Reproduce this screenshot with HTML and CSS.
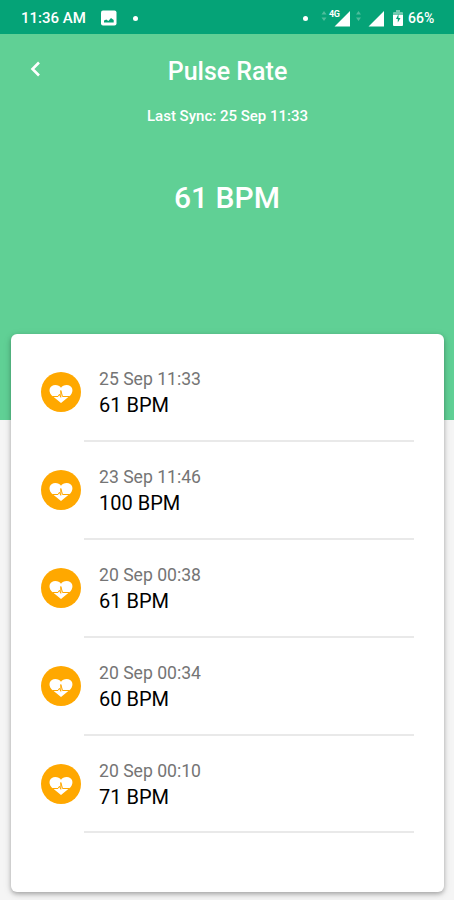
FILE: index.html
```html
<!DOCTYPE html>
<html lang="en">
<head>
    <meta charset="UTF-8">
    <meta name="viewport" content="width=device-width, initial-scale=1.0">
    <title>Pulse Rate</title>
    <link rel="stylesheet" href="styles.css">
</head>
<body>
    <svg class="sprite" width="0" height="0">
        <symbol id="heart" viewBox="0 0 40 40">
            <circle cx="20" cy="20" r="20" fill="#ffa800"/>
            <path d="M20 31 10.500 23.200C6.500 18.500 9 13 14.300 13c2.600 0 4.400 1 5.700 2.800C21.300 14 23.100 13 25.700 13c5.300 0 7.800 5.500 3.800 10.200Z" fill="#fff"/>
            <path d="M11.500 24.500h5.500l1.400-2.200 1.400 3V18.500l1.700 6h7" fill="none" stroke="#ffa800" stroke-width="1"/>
        </symbol>
    </svg>

    <div class="status-bar">
        <span class="time">11:36 AM</span>
        <svg class="image-icon" width="16" height="16" viewBox="0 0 16 16">
            <rect width="15.500" height="15" y=".5" rx="2" fill="#fff"/>
            <path d="M3 12.500V10.500l2.300-1 2 1.500 2.700-3 2.700 2v2.500Z" fill="#05a377"/>
        </svg>
        <span class="dot"></span>
        <div class="status-right">
            <span class="dot"></span>
            <!-- data arrows and signal bars -->
            <svg class="signals" width="64" height="20" viewBox="0 0 64 20">
                <path d="M.5 6.500 3 3l2.500 3.500ZM.5 9.500h5L3 13ZM35 6.500 37.500 3l2.500 3.500ZM35 9.500h5L37.500 13Z" fill="#4fbd9c"/>
                <path d="M29 3v15.500H13.500ZM63 3v15.500H47.500Z" fill="#fff"/>
                <text class="network" x="8" y="8.500">4G</text>
            </svg>
            <svg class="battery" width="10" height="16" viewBox="0 0 10 16">
                <path d="M3 0h4v2h2q1 0 1 1v3H0V3q0-1 1-1h2Z" fill="#72cab0"/>
                <path d="M0 5h10v10q0 1-1 1H1q-1 0-1-1Z" fill="#fff"/>
                <path d="M5.500 4v4H7.500L4.800 12.500V9H3Z" fill="#05a377"/>
            </svg>
            <span class="percent">66%</span>
        </div>
    </div>

    <div class="hero">
        <div class="top-bar">
            <svg class="back" width="10" height="16" viewBox="0 0 10 16">
                <path d="M9 1.500 2.500 8 9 14.500" fill="none" stroke="#fff" stroke-width="2.600"/>
            </svg>
            <h1>Pulse Rate</h1>
        </div>
        <p class="last-sync">Last Sync: 25 Sep 11:33</p>
        <p class="current">61 BPM</p>
    </div>

    <div class="card">
        <div class="reading">
            <svg class="heart"><use href="#heart"/></svg>
            <div class="info">
                <div class="date">25 Sep 11:33</div>
                <div class="value">61 BPM</div>
            </div>
        </div>
        <div class="reading">
            <svg class="heart"><use href="#heart"/></svg>
            <div class="info">
                <div class="date">23 Sep 11:46</div>
                <div class="value">100 BPM</div>
            </div>
        </div>
        <div class="reading">
            <svg class="heart"><use href="#heart"/></svg>
            <div class="info">
                <div class="date">20 Sep 00:38</div>
                <div class="value">61 BPM</div>
            </div>
        </div>
        <div class="reading">
            <svg class="heart"><use href="#heart"/></svg>
            <div class="info">
                <div class="date">20 Sep 00:34</div>
                <div class="value">60 BPM</div>
            </div>
        </div>
        <div class="reading">
            <svg class="heart"><use href="#heart"/></svg>
            <div class="info">
                <div class="date">20 Sep 00:10</div>
                <div class="value">71 BPM</div>
            </div>
        </div>
    </div>
</body>
</html>
```

FILE: styles.css
```css
* {
    box-sizing: border-box;
}

body {
    font-family: Roboto, 'Liberation Sans', sans-serif;
    background-color: #f5f5f5;
    margin: 0;
    height: 900px;
    overflow: hidden;
}

h1, p {
    margin: 0;
}

.sprite {
    display: block;
}

.status-bar {
    display: flex;
    align-items: center;
    height: 34px;
    padding: 2px 19px 0 21px;
    background-color: #05a377;
    color: #fff;
    font-size: 15px;
    font-weight: 500;
}

.time {
    width: 65px;
    white-space: nowrap;
}

.image-icon {
    margin: 0 16px 0 15px;
}

.dot {
    width: 5px;
    height: 5px;
    border-radius: 50%;
    background-color: #fff;
}

.status-right {
    display: flex;
    align-items: center;
    margin-left: auto;
}

.signals {
    margin: 0 8px 0 13px;
}

.network {
    font-size: 9px;
    font-weight: 700;
    letter-spacing: -0.5px;
    fill: #fff;
}

.battery {
    margin-right: 5px;
}

.percent {
    width: 27px;
    font-size: 14px;
    white-space: nowrap;
}

.hero {
    height: 386px;
    background-color: #60d095;
    color: #fff;
    text-align: center;
}

.top-bar {
    display: flex;
    align-items: center;
    height: 72px;
    padding: 0 30px;
}

.back {
    margin-top: -2px;
}

h1 {
    flex: 1;
    margin-right: 9px;
    padding-top: 2px;
    font-size: 25px;
    font-weight: 500;
}

.last-sync {
    padding-left: 1px;
    font-size: 15px;
    font-weight: 500;
    line-height: 20px;
}

.current {
    margin-top: 52px;
    font-size: 30px;
    font-weight: 500;
    line-height: 40px;
}

.card {
    position: relative;
    width: 433px;
    height: 558px;
    margin: -86px 0 0 11px;
    padding: 10px 30px 0;
    background-color: #fff;
    border-radius: 6px;
    box-shadow: 0 2px 4px rgba(0, 0, 0, 0.25), 0 2px 8px rgba(0, 0, 0, 0.12);
}

.reading {
    display: flex;
    height: 97.9px;
}

.heart {
    width: 40px;
    height: 40px;
    margin: 28px 3px 0 0;
}

.info {
    flex: 1;
    padding: 24px 0 0 15px;
    border-bottom: 2px solid #e9e9e9;
}

.date {
    color: #757575;
    font-size: 17.6px;
    line-height: 23px;
}

.value {
    color: #000;
    font-size: 20px;
    line-height: 29px;
}
```
